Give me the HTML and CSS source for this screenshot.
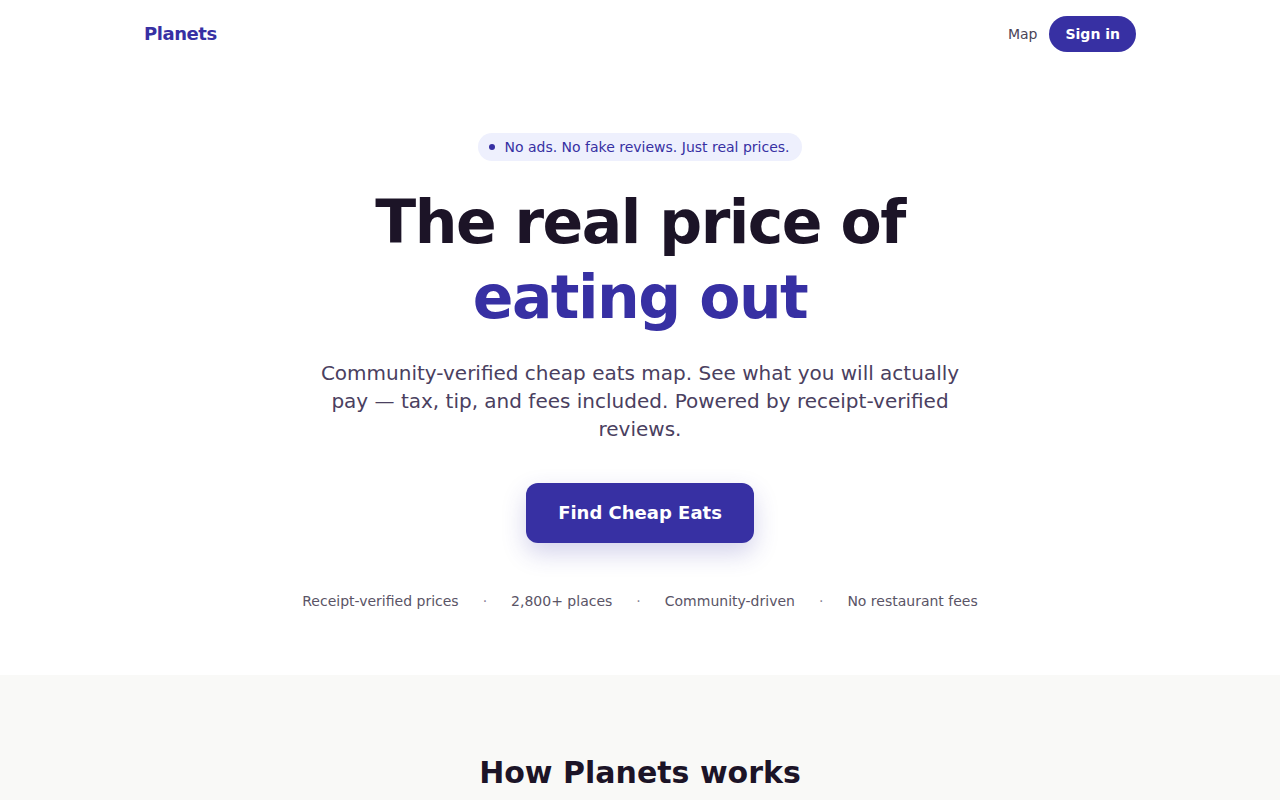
FILE: index.html
```html
<!DOCTYPE html>
<html lang="en">
<head>
<meta charset="utf-8">
<title>Planets</title>
<link rel="stylesheet" href="styles.css">
</head>
<body>
<header class="nav">
  <div class="container nav-inner">
    <a class="logo" href="#">Planets</a>
    <nav class="nav-links">
      <a class="nav-link" href="#">Map</a>
      <a class="btn-signin" href="#">Sign in</a>
    </nav>
  </div>
</header>
<main>
  <section class="hero">
    <div class="container hero-inner">
      <div class="badge"><span class="badge-dot"></span>No ads. No fake reviews. Just real prices.</div>
      <h1 class="hero-title">The real price of<br><span class="accent">eating out</span></h1>
      <p class="hero-sub">Community-verified cheap eats map. See what you will actually pay — tax, tip, and fees included. Powered by receipt-verified reviews.</p>
      <a class="btn-primary" href="#">Find Cheap Eats</a>
      <ul class="stats">
        <li>Receipt-verified prices</li>
        <li class="sep">·</li>
        <li>2,800+ places</li>
        <li class="sep">·</li>
        <li>Community-driven</li>
        <li class="sep">·</li>
        <li>No restaurant fees</li>
      </ul>
    </div>
  </section>
  <section class="how">
    <div class="container">
      <h2 class="how-title">How Planets works</h2>
    </div>
  </section>
</main>
</body>
</html>
```

FILE: styles.css
```css
* { box-sizing: border-box; }
html, body { margin: 0; padding: 0; }
body {
  font-family: "DejaVu Sans", sans-serif;
  background: #ffffff;
  color: #1c1427;
}
a { text-decoration: none; }
.container {
  max-width: 1024px;
  margin: 0 auto;
  padding: 0 16px;
}
.nav-inner {
  height: 68px;
  display: flex;
  align-items: center;
  justify-content: space-between;
}
.logo {
  font-size: 18px;
  line-height: 28px;
  padding-bottom: 1px;
  font-weight: 700;
  letter-spacing: -0.025em;
  color: #3730a3;
}
.nav-links {
  display: flex;
  align-items: center;
  gap: 12px;
}
.nav-link {
  font-size: 14px;
  color: #4a4458;
}
.btn-signin {
  display: inline-flex;
  align-items: center;
  height: 36px;
  padding: 0 16px;
  border-radius: 999px;
  background: #3730a3;
  color: #fff;
  font-size: 14px;
  font-weight: 700;
}
.hero {
  padding: 65px 0 64px;
}
.hero-inner {
  display: flex;
  flex-direction: column;
  align-items: center;
  text-align: center;
}
.badge {
  display: inline-flex;
  align-items: center;
  gap: 9px;
  height: 28px;
  padding: 0 12px 0 11px;
  border-radius: 999px;
  background: #eef0fd;
  color: #3730a3;
  font-size: 14px;
}
.badge-dot {
  width: 6px;
  height: 6px;
  border-radius: 50%;
  background: #3730a3;
}
.hero-title {
  margin: 24px 0 0;
  font-size: 60px;
  line-height: 75px;
  font-weight: 700;
  letter-spacing: -0.025em;
  color: #1c1427;
}
.accent { color: #3730a3; }
.hero-sub {
  margin: 24px 0 0;
  max-width: 660px;
  font-size: 20px;
  line-height: 28px;
  color: #4a4060;
}
.btn-primary {
  margin-top: 40px;
  display: inline-flex;
  align-items: center;
  justify-content: center;
  width: 228px;
  height: 60px;
  padding-bottom: 1px;
  border-radius: 12px;
  background: #3730a3;
  color: #fff;
  font-size: 18px;
  font-weight: 700;
  box-shadow: 0 10px 25px rgba(55, 48, 163, 0.22);
}
.stats {
  list-style: none;
  margin: 48px 0 0;
  padding: 0;
  display: flex;
  gap: 24px;
  font-size: 14px;
  line-height: 20px;
  color: #5a5466;
}
.stats .sep { color: #8a8496; }
.how {
  background: #f9f9f7;
  padding: 80px 0;
}
.how-title {
  margin: 0;
  text-align: center;
  font-size: 30px;
  line-height: 36px;
  font-weight: 700;
  color: #1c1427;
}
```
